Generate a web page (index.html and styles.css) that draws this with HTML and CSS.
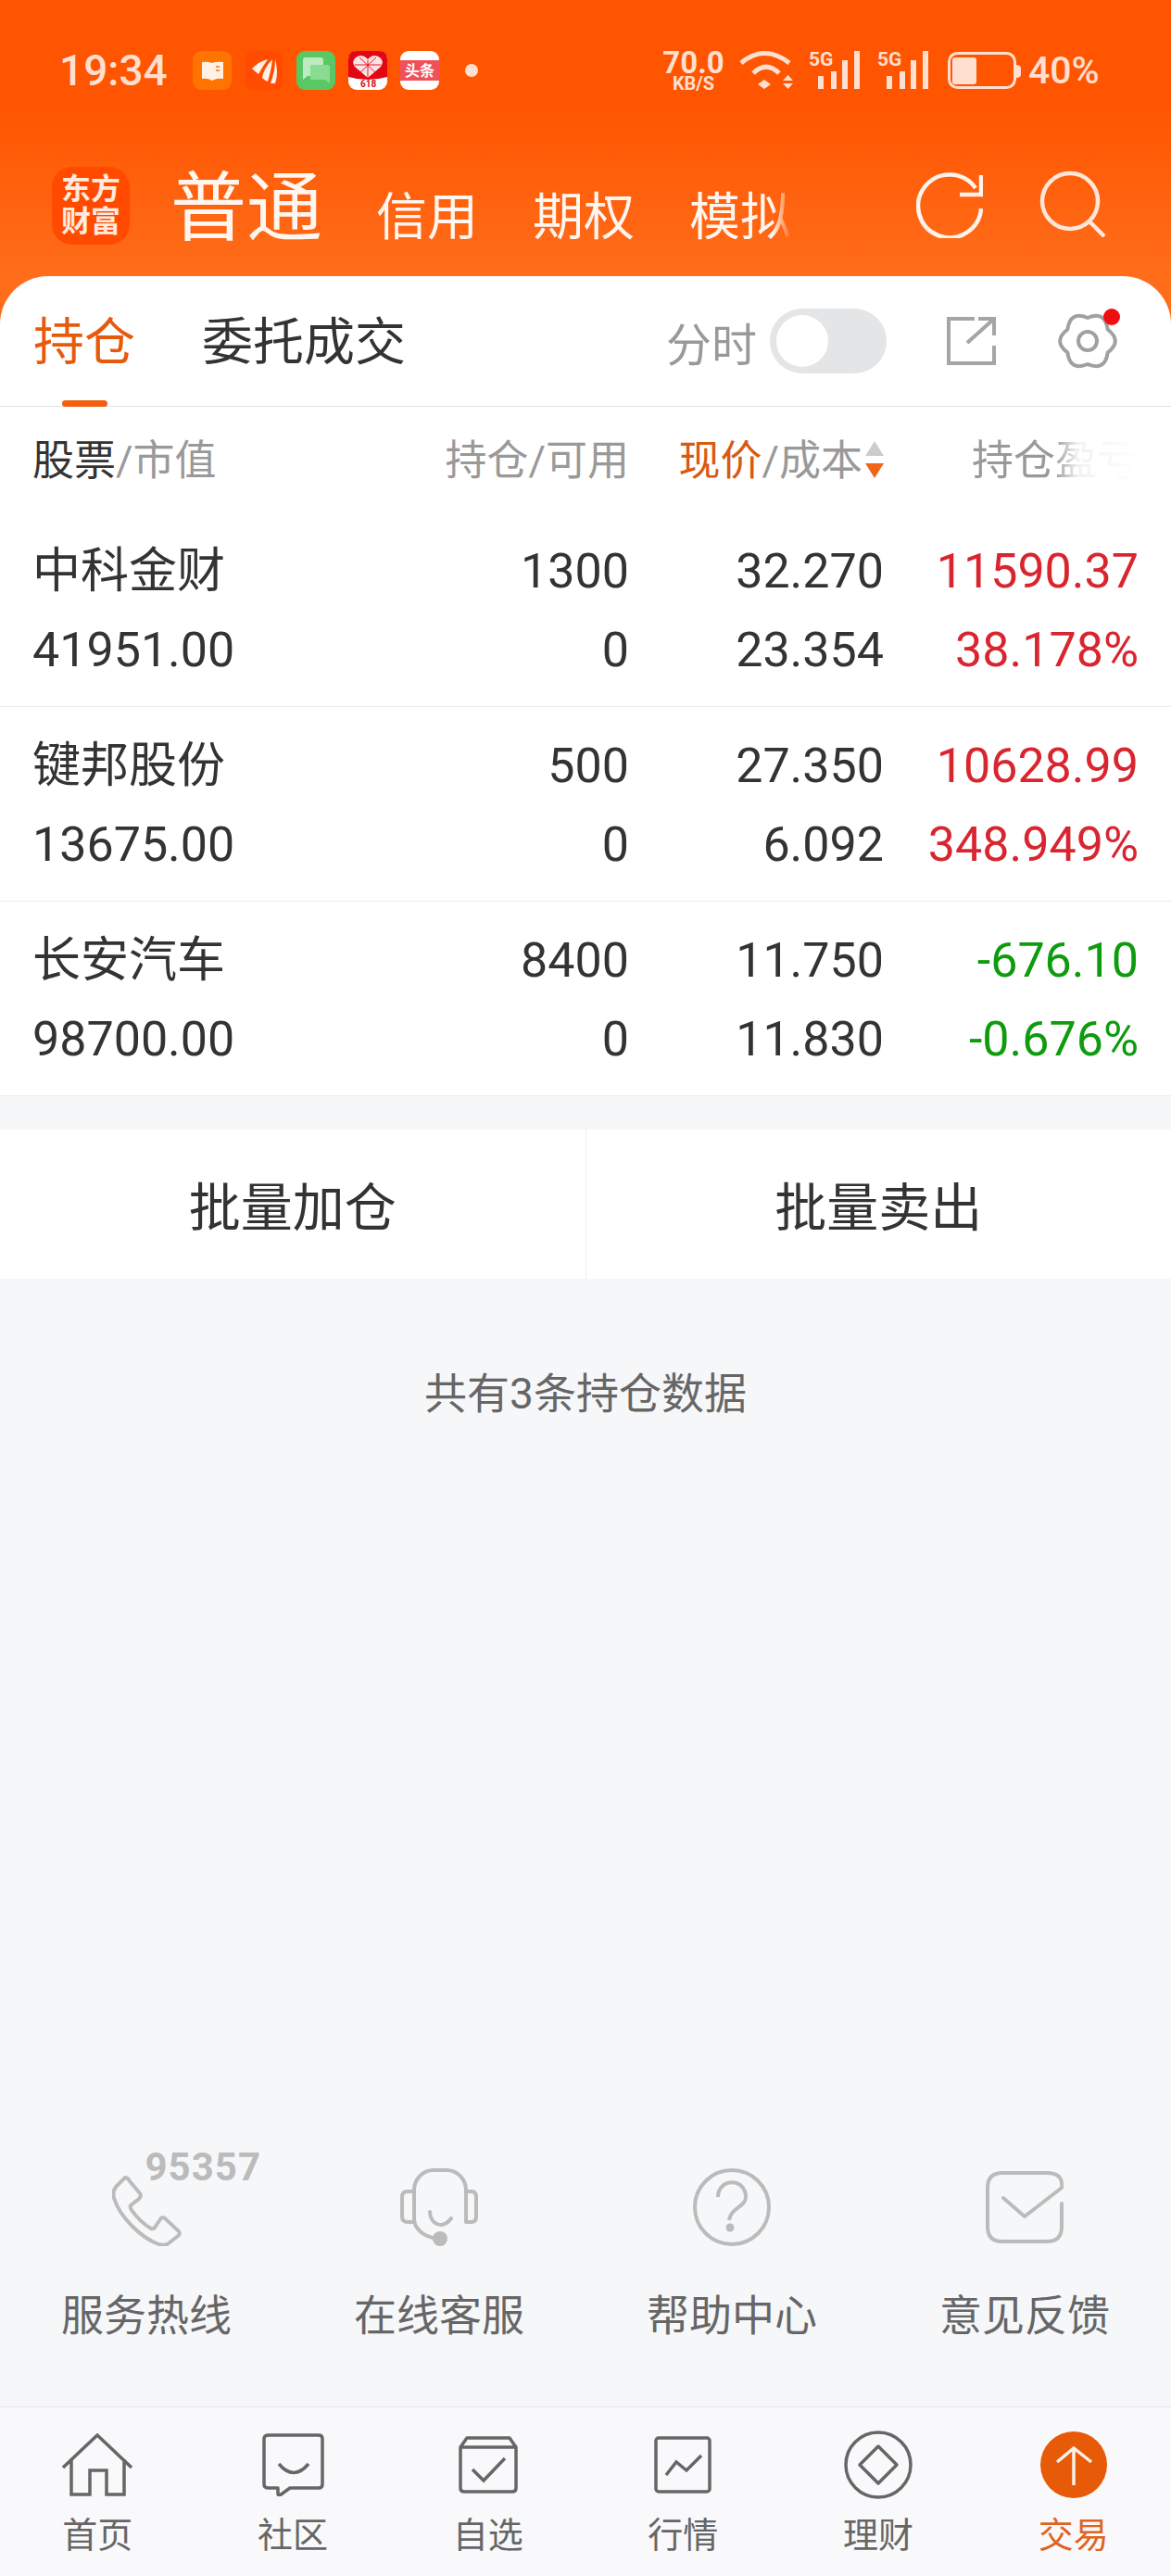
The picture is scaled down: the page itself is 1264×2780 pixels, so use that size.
FILE: index.html
```html
<html>
    <head>
        <meta charset="utf-8">
        <link rel="stylesheet" href="styles.css">
    </head>
    <body>
        <div class="page">
            <div class="top">
                <div class="status">
                    <span class="time">19:34</span>
                    <div class="apps">
                        <svg class="app" viewBox="0 0 42 42"><rect width="42" height="42" rx="9" fill="#ff7300"/><path d="M10 12Q16 11 21 13Q26 11 33 12V30Q26 29 21 32Q16 29 10 30Z" fill="#fff2e4"/><path d="M25 17H29M25 21H29" stroke="#ff7300" stroke-width="1.6"/></svg>
                        <svg class="app" viewBox="0 0 42 42"><rect width="42" height="42" rx="9" fill="#ff4c00"/><path d="M8 19Q16 11 25 9Q20 16 15 25Q11 22 8 19ZM19 29Q21 18 30 9Q29 20 25 33Q22 32 19 29ZM28 35Q33 22 33 9Q37 24 33 35Z" fill="#fff1e8"/></svg>
                        <svg class="app" viewBox="0 0 42 42"><rect width="42" height="42" rx="9" fill="#58c764"/><path d="M7 9Q7 7 9 7H26Q29 7 29 10V24Q29 27 26 27H12L7 31Z" fill="#bdebc0"/><path d="M15 15H33Q36 15 36 18V35L31 31H15Z" fill="#8adc92"/></svg>
                        <svg class="app" viewBox="0 0 42 42"><rect width="42" height="42" rx="9" fill="#fff"/><path d="M0 9Q0 0 9 0H33Q42 0 42 9V28Q21 34 0 28Z" fill="#e30613"/><path d="M21 29L7 17Q3 11 8 7Q15 2 21 9Q27 2 34 7Q39 11 35 17Z" fill="#fbe3e3"/><path d="M12 7L30 24M30 7L12 24M21 10V29M7 15H35" stroke="#e30613" stroke-width="0.9" fill="none"/><text class="app-num" x="13" y="39">618</text></svg>
                        <svg class="app" viewBox="0 0 42 42"><rect width="42" height="42" rx="9" fill="#fff"/><rect y="10" width="42" height="22" fill="#f0505a"/><text class="app-word" x="5" y="27">头条</text></svg>
                    </div>
                    <span class="dot"></span>
                    <div class="net">
                        <span class="net-num">70.0</span>
                        <span class="net-unit">KB/S</span>
                    </div>
                    <svg class="wifi" viewBox="0 0 59 42"><path d="M3 13Q28 -8 55 13M16 24Q30 10 44 24" fill="none" stroke="#ffdfcf" stroke-width="5"/><path d="M21 36L28 31L35 36L28 41ZM48 32L53.500 26L59 32ZM48 35L59 35L53.500 41Z" fill="#ffdfcf"/></svg>
                    <svg class="signal" viewBox="0 0 55 44"><text class="signal-text" x="0" y="17">5G</text><path d="M10 28H16V42H10ZM24 23H30V42H24ZM36 11H42V42H36ZM49 1H55V42H49Z" fill="#ffdfcf"/></svg>
                    <svg class="signal" viewBox="0 0 55 44"><text class="signal-text" x="0" y="17">5G</text><path d="M10 28H16V42H10ZM24 23H30V42H24ZM36 11H42V42H36ZM49 1H55V42H49Z" fill="#ffdfcf"/></svg>
                    <svg class="battery" viewBox="0 0 79 41"><rect x="1.500" y="1.500" width="71" height="37" rx="9" fill="none" stroke="#ffdfcf" stroke-width="3"/><path d="M74 14Q79 14 79 18V24Q79 28 74 28Z" fill="#ffdfcf"/><rect x="5" y="6" width="26" height="29" rx="3" fill="#ffdfcf"/></svg>
                    <span class="percent">40%</span>
                </div>

                <div class="nav">
                    <div class="logo">东方<br>财富</div>
                    <div class="nav-tabs">
                        <span class="nav-main">普通</span>
                        <span class="nav-item">信用</span>
                        <span class="nav-item">期权</span>
                        <span class="nav-item">模拟</span>
                    </div>
                    <svg class="refresh" viewBox="0 0 72 72"><path d="M70 40A34 34 0 1 1 64 18M70 4V25H47" fill="none" stroke="#fff3eb" stroke-width="4.500"/></svg>
                    <svg class="search" viewBox="0 0 72 72"><circle cx="33" cy="33" r="30" fill="none" stroke="#ffe6d9" stroke-width="4.500"/><path d="M54 55L70 71" stroke="#ffe6d9" stroke-width="4.500"/></svg>
                </div>

                <div class="tabs">
                    <div class="tab tab-on">持仓</div>
                    <div class="tab">委托成交</div>
                    <span class="fenshi">分时</span>
                    <div class="toggle"><span class="knob"></span></div>
                    <svg class="share" viewBox="0 0 53 52"><path d="M30 2H2V50H51V31M22 28L51 2M34 2H51V20" fill="none" stroke="#a5a5a5" stroke-width="4"/></svg>
                    <div class="gear">
                        <svg class="gear-icon" viewBox="-2 -2 68 64"><path d="M53.650 17.500Q51 -2.900 32 5Q13 -2.900 10.350 17.500Q-6 30 10.350 42.500Q13 62.900 32 55Q51 62.900 53.650 42.500Q70 30 53.650 17.500Z" fill="none" stroke="#a0a0a0" stroke-width="4" stroke-linejoin="round"/><circle cx="32" cy="30" r="10" fill="none" stroke="#a0a0a0" stroke-width="4"/></svg>
                        <span class="gear-dot"></span>
                    </div>
                </div>
            </div>

            <div class="table">
                <div class="head">
                    <div><span class="dark">股票</span>/市值</div>
                    <div class="num">持仓/可用</div>
                    <div class="num price-head">
                        <span class="orange">现价</span>/成本
                        <span class="sort"><i class="sort-up"></i><i class="sort-down"></i></span>
                    </div>
                    <div class="num profit-head">持仓盈亏</div>
                </div>

                <div class="row">
                    <div>中科金财</div><div class="num">1300</div><div class="num">32.270</div><div class="num up">11590.37</div>
                    <div>41951.00</div><div class="num">0</div><div class="num">23.354</div><div class="num up">38.178%</div>
                </div>
                <div class="row">
                    <div>键邦股份</div><div class="num">500</div><div class="num">27.350</div><div class="num up">10628.99</div>
                    <div>13675.00</div><div class="num">0</div><div class="num">6.092</div><div class="num up">348.949%</div>
                </div>
                <div class="row">
                    <div>长安汽车</div><div class="num">8400</div><div class="num">11.750</div><div class="num down">-676.10</div>
                    <div>98700.00</div><div class="num">0</div><div class="num">11.830</div><div class="num down">-0.676%</div>
                </div>
            </div>

            <div class="actions">
                <div class="action">批量加仓</div>
                <div class="action">批量卖出</div>
            </div>

            <div class="count">共有3条持仓数据</div>

            <div class="service">
                <div class="service-item">
                    <div class="service-icon">
                        <svg class="phone" viewBox="0 0 75 76"><path d="M14 2Q17 2 19 6L30 19Q32 22 29 25L20 32Q19 34 21 37Q30 50 42 57Q44 58 46 56L52 47Q54 44 57 46L72 60Q74 63 71 65L61 73Q57 76 50 74C30 66 8 44 2 24Q0 16 5 11Z" fill="none" stroke="#bbb" stroke-width="4"/></svg>
                        <span class="hotline">95357</span>
                    </div>
                    <div class="service-name">服务热线</div>
                </div>
                <div class="service-item">
                    <div class="service-icon">
                        <svg class="svc" viewBox="0 0 84 84"><path d="M15 26V54C15 66 26 74 40 76M15 30V24C15 10 26 2 36 2H50C60 2 71 10 71 24V58M32 47C32 60 46 67 55 54" fill="none" stroke="#bbb" stroke-width="4" stroke-linecap="round"/><path d="M15 25H8Q2 25 2 31V52Q2 58 8 58H15M71 25H77Q82 25 82 31V52Q82 58 77 58H71" fill="none" stroke="#bbb" stroke-width="4"/><circle cx="43" cy="76" r="8" fill="#bbb"/></svg>
                    </div>
                    <div class="service-name">在线客服</div>
                </div>
                <div class="service-item">
                    <div class="service-icon">
                        <svg class="svc" viewBox="0 0 84 84"><circle cx="42" cy="42" r="40" fill="none" stroke="#bbb" stroke-width="4"/><path d="M27 31C27 10 57 10 57 31C57 42 41 42 39 56" fill="none" stroke="#bbb" stroke-width="4"/><circle cx="40" cy="64" r="4.500" fill="#bbb"/></svg>
                    </div>
                    <div class="service-name">帮助中心</div>
                </div>
                <div class="service-item">
                    <div class="service-icon">
                        <svg class="svc" viewBox="0 0 84 84"><path d="M82 38V63Q82 79 66 79H18Q2 79 2 63V21Q2 5 18 5H66Q84 5 82 21L42 52L19 32" fill="none" stroke="#bbb" stroke-width="4" stroke-linecap="round" stroke-linejoin="round"/></svg>
                    </div>
                    <div class="service-name">意见反馈</div>
                </div>
            </div>

            <div class="tabbar">
                <div class="bar-item">
                    <div class="bar-icon"><svg class="house" viewBox="0 0 76 68"><path d="M1 37L38 2L75 37M10 28V66H30V40H48V66H67V28" fill="none" stroke="#666" stroke-width="3.500"/></svg></div>
                    <div class="bar-name">首页</div>
                </div>
                <div class="bar-item">
                    <div class="bar-icon"><svg class="chat" viewBox="0 0 67 68"><path d="M7 2H61Q65 2 65 6V55Q65 59 61 59H30L19 67Q17 67 17 65V59H7Q2 59 2 55V6Q2 2 7 2Z" fill="none" stroke="#666" stroke-width="3.500" stroke-linejoin="round"/><path d="M18 33Q34 52 50 33" fill="none" stroke="#666" stroke-width="3.500"/></svg></div>
                    <div class="bar-name">社区</div>
                </div>
                <div class="bar-item">
                    <div class="bar-icon"><svg class="box" viewBox="0 0 64 62"><path d="M2 12L9 2H55L62 12V56Q62 60 58 60H6Q2 60 2 56ZM2 12H62" fill="none" stroke="#666" stroke-width="3.500" stroke-linejoin="round"/><path d="M15 36L27 48L50 24" fill="none" stroke="#666" stroke-width="3.500"/></svg></div>
                    <div class="bar-name">自选</div>
                </div>
                <div class="bar-item">
                    <div class="bar-icon"><svg class="chart" viewBox="0 0 62 62"><rect x="2" y="2" width="58" height="58" rx="3" fill="none" stroke="#666" stroke-width="3.500"/><path d="M13 42L24 28L35 37L51 21" fill="none" stroke="#666" stroke-width="3.500"/></svg></div>
                    <div class="bar-name">行情</div>
                </div>
                <div class="bar-item">
                    <div class="bar-icon"><svg class="money" viewBox="0 0 74 74"><circle cx="37" cy="37" r="35" fill="none" stroke="#666" stroke-width="3.500"/><path d="M37 17L57 37L37 57L17 37Z" fill="none" stroke="#666" stroke-width="3.500" stroke-linejoin="round"/></svg></div>
                    <div class="bar-name">理财</div>
                </div>
                <div class="bar-item">
                    <div class="bar-icon"><svg class="trade" viewBox="0 0 72 72"><circle cx="36" cy="36" r="36" fill="#e75a08"/><path d="M36 18V58M18 33L36 18L55 33" fill="none" stroke="#fff0e6" stroke-width="3.500"/></svg></div>
                    <div class="bar-name bar-on">交易</div>
                </div>
            </div>
        </div>
    </body>
</html>
```

FILE: styles.css
```css
* {
    box-sizing: border-box;
}
body {
    margin: 0;
    background: #f6f7f9;
    color: #333;
    font-family: Roboto, "Noto Sans CJK SC", sans-serif;
}
.page {
    display: flex;
    flex-direction: column;
    height: 2780px;
    overflow: hidden;
}

/* orange top part */
.top {
    background: linear-gradient(#ff5500 0, #ff5500 110px, #ff6d1b 298px, #ff6f1d 439px);
}
.status {
    display: flex;
    align-items: center;
    height: 152px;
    padding-left: 64px;
    color: #ffdfcf;
}
.time {
    width: 115px;
    font-size: 46px;
    font-weight: 500;
}
.apps {
    display: flex;
    gap: 14px;
    margin-left: 29px;
}
.app {
    width: 42px;
    height: 42px;
    overflow: visible;
}
.app-num {
    fill: #d0121b;
    font-size: 10px;
    font-weight: 700;
}
.app-word {
    fill: #fff;
    font-size: 16px;
    font-weight: 700;
}
.dot {
    width: 14px;
    height: 14px;
    margin-left: 28px;
    border-radius: 50%;
    background: #ffdfcf;
}
.net {
    display: flex;
    flex-direction: column;
    align-items: center;
    width: 67px;
    margin-left: 199px;
    font-weight: 700;
}
.net-num {
    font-size: 33px;
    line-height: 27px;
}
.net-unit {
    font-size: 20px;
    line-height: 18px;
}
.wifi {
    width: 59px;
    height: 42px;
    margin-left: 15px;
}
.signal {
    width: 55px;
    height: 44px;
    margin-left: 17px;
    overflow: visible;
}
.signal + .signal {
    margin-left: 19px;
}
.signal-text {
    fill: #ffdfcf;
    font-size: 21px;
    font-weight: 700;
}
.battery {
    width: 79px;
    height: 41px;
    margin-left: 21px;
    margin-top: 1px;
}
.percent {
    margin-left: 8px;
    font-size: 41px;
    font-weight: 500;
}

.nav {
    display: flex;
    align-items: center;
    height: 146px;
    padding-left: 56px;
}
.logo {
    width: 84px;
    height: 84px;
    margin-top: -6px;
    border-radius: 22px;
    background: #ff4a00;
    color: #ffeadf;
    font-size: 32px;
    font-weight: 700;
    line-height: 35px;
    text-align: center;
    padding-top: 7px;
}
.nav-tabs {
    display: flex;
    align-items: baseline;
    gap: 59px;
    width: 708px;
    margin-left: 44px;
    color: #fff6f0;
    -webkit-mask-image: linear-gradient(to right, #000 650px, transparent 670px);
    mask-image: linear-gradient(to right, #000 650px, transparent 670px);
}
.nav-main {
    font-size: 82px;
    line-height: 98px;
    margin-right: -1px;
}
.nav-item {
    font-size: 55px;
}
.refresh {
    width: 72px;
    height: 72px;
    margin-left: 97px;
    margin-top: -8px;
}
.search {
    width: 72px;
    height: 72px;
    margin-left: 61px;
    margin-top: -10px;
}

.tabs {
    display: flex;
    align-items: center;
    height: 141px;
    padding-left: 36px;
    background: #fff;
    border-radius: 52px 52px 0 0;
    border-bottom: 1px solid #e3e3e3;
}
.tab {
    position: relative;
    font-size: 55px;
    line-height: 94px;
    margin-top: 1px;
}
.tab + .tab {
    margin-left: 72px;
}
.tab-on {
    color: #e75a0c;
}
.tab-on::after {
    content: "";
    position: absolute;
    left: 31px;
    bottom: -23px;
    width: 49px;
    height: 7px;
    border-radius: 4px;
    background: #f0600f;
}
.fenshi {
    margin-left: 281px;
    color: #999;
    font-size: 49px;
}
.toggle {
    width: 126px;
    height: 70px;
    margin-left: 14px;
    padding: 7px;
    border-radius: 35px;
    background: #e4e5e7;
}
.knob {
    display: block;
    width: 56px;
    height: 56px;
    border-radius: 50%;
    background: #fff;
}
.share {
    width: 53px;
    height: 52px;
    margin-left: 65px;
}
.gear {
    position: relative;
    margin-left: 65px;
    height: 64px;
}
.gear-icon {
    display: block;
    width: 68px;
    height: 64px;
}
.gear-dot {
    position: absolute;
    top: -3px;
    left: 51px;
    width: 18px;
    height: 18px;
    border-radius: 50%;
    background: #f20d12;
}

/* holdings */
.table {
    background: #fff;
}
.head,
.row {
    display: grid;
    grid-template-columns: 369px 275px 275px 275px;
    padding-left: 35px;
}
.head {
    height: 114px;
    padding-top: 27px;
    color: #999;
    font-size: 45px;
    line-height: 64px;
}
.row {
    grid-auto-rows: 85px;
    align-content: start;
    height: 210px;
    padding-top: 21px;
    border-bottom: 1px solid #ececec;
    font-size: 52px;
    line-height: 85px;
}
.num {
    text-align: right;
}
.dark {
    color: #333;
}
.orange {
    color: #d9590f;
}
.price-head {
    position: relative;
    padding-right: 23px;
}
.sort {
    position: absolute;
    right: 0;
    top: 10px;
}
.sort-up,
.sort-down {
    position: absolute;
    right: 0;
    border-left: 10px solid transparent;
    border-right: 10px solid transparent;
}
.sort-up {
    top: 0;
    border-bottom: 16px solid #ccc;
}
.sort-down {
    top: 24px;
    border-top: 16px solid #f0651a;
}
.profit-head {
    -webkit-mask-image: linear-gradient(to right, #000 184px, #0002 209px, #0000 275px);
    mask-image: linear-gradient(to right, #000 184px, #0002 209px, #0000 275px);
}
.up {
    color: #d9252f;
}
.down {
    color: #0e9b0e;
}

.actions {
    display: flex;
    height: 161px;
    margin-top: 36px;
    background: #fff;
}
.action {
    flex: 1;
    display: flex;
    align-items: center;
    justify-content: center;
    font-size: 56px;
    padding-bottom: 2px;
}
.action + .action {
    border-left: 1px solid #f1f1f1;
}
.count {
    margin-top: 94px;
    color: #666;
    font-size: 46px;
    line-height: 60px;
    text-align: center;
}

/* help links */
.service {
    display: flex;
    margin-top: auto;
    padding-bottom: 68px;
}
.service-item {
    flex: 1;
    display: flex;
    flex-direction: column;
    align-items: center;
}
.service-icon {
    position: relative;
    display: flex;
    align-items: center;
    height: 84px;
    margin-bottom: 45px;
}
.svc {
    width: 84px;
    height: 84px;
}
.phone {
    width: 75px;
    height: 76px;
    margin-top: 8px;
}
.hotline {
    position: absolute;
    left: 36px;
    top: -21px;
    color: #bbb;
    font-size: 42px;
    font-weight: 700;
    letter-spacing: 1px;
    line-height: 40px;
}
.service-name {
    color: #666;
    font-size: 46px;
    line-height: 60px;
}

.tabbar {
    display: flex;
    height: 183px;
    padding-top: 26px;
    border-top: 1px solid #e6e6e8;
    background: #f9f9fb;
}
.bar-item {
    flex: 1;
    display: flex;
    flex-direction: column;
    align-items: center;
}
.bar-icon {
    display: flex;
    align-items: center;
    justify-content: center;
    height: 72px;
    margin-bottom: 18px;
}
.house {
    width: 76px;
    height: 68px;
}
.chat {
    width: 67px;
    height: 68px;
}
.box,
.chart {
    width: 64px;
    height: 62px;
}
.chart {
    width: 62px;
}
.money {
    width: 74px;
    height: 74px;
}
.trade {
    width: 72px;
    height: 72px;
}
.bar-name {
    color: #666;
    font-size: 38px;
    line-height: 44px;
}
.bar-on {
    color: #e0641f;
}
```
